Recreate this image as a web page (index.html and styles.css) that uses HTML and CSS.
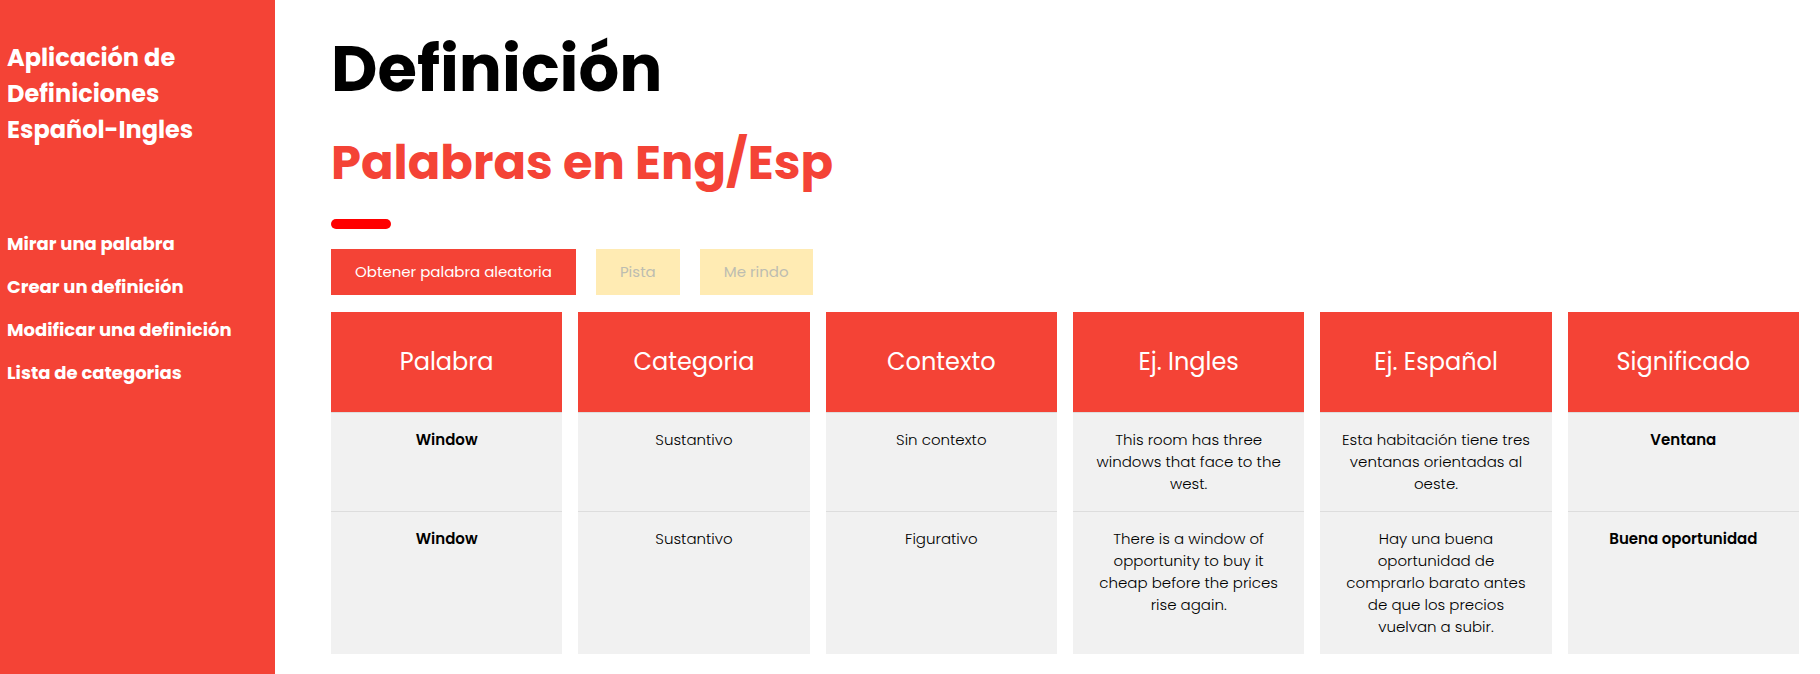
FILE: index.html
```html
<!DOCTYPE html>
<html lang="es">
<head>
<meta charset="utf-8">
<meta name="viewport" content="width=device-width, initial-scale=1">
<title>Definición</title>
<link rel="stylesheet" href="styles.css">
</head>
<body>
<div class="layout">
  <nav class="sidebar">
    <h3 class="brand">Aplicación de<br>Definiciones<br>Español-Ingles</h3>
    <div class="menu">
      <a href="#mirar">Mirar una palabra</a>
      <a href="#crear">Crear un definición</a>
      <a href="#modificar">Modificar una definición</a>
      <a href="#categorias">Lista de categorias</a>
    </div>
  </nav>
  <main class="main">
    <header class="intro">
      <h1 class="title">Definición</h1>
      <h2 class="subtitle">Palabras en Eng/Esp</h2>
      <hr class="rule">
      <div class="actions">
        <button class="btn btn-primary" type="button">Obtener palabra aleatoria</button>
        <button class="btn btn-muted" type="button" disabled>Pista</button>
        <button class="btn btn-muted" type="button" disabled>Me rindo</button>
      </div>
    </header>
    <table class="words">
      <thead>
        <tr>
          <th scope="col">Palabra</th>
          <th scope="col">Categoria</th>
          <th scope="col">Contexto</th>
          <th scope="col">Ej. Ingles</th>
          <th scope="col">Ej. Español</th>
          <th scope="col">Significado</th>
        </tr>
      </thead>
      <tbody>
        <tr>
          <td class="strong">Window</td>
          <td>Sustantivo</td>
          <td>Sin contexto</td>
          <td>This room has three windows that face to the west.</td>
          <td>Esta habitación tiene tres ventanas orientadas al oeste.</td>
          <td class="strong">Ventana</td>
        </tr>
        <tr>
          <td class="strong">Window</td>
          <td>Sustantivo</td>
          <td>Figurativo</td>
          <td>There is a window of opportunity to buy it cheap before the prices rise again.</td>
          <td>Hay una buena oportunidad de comprarlo barato antes de que los precios vuelvan a subir.</td>
          <td class="strong">Buena oportunidad</td>
        </tr>
      </tbody>
    </table>
  </main>
</div>
</body>
</html>
```

FILE: styles.css
```css
* {
  box-sizing: border-box;
}

body {
  margin: 0;
  font-family: Poppins, Inter, "Open Sans", sans-serif;
  font-size: 15px;
  line-height: 22px;
  color: #000;
  background: #fff;
}

.layout {
  display: flex;
  min-height: 100vh;
}

.sidebar {
  flex: 0 0 275px;
  padding: 40px 7px;
  color: #fff;
  background: #f44336;
}

.brand {
  margin: 0 0 82px;
  font-size: 24px;
  font-weight: 700;
  line-height: 36px;
}

.menu {
  display: flex;
  flex-direction: column;
  gap: 16px;
}

.menu a {
  color: inherit;
  font-size: 18px;
  font-weight: 700;
  line-height: 27px;
  text-decoration: none;
}

.main {
  flex: 1;
  min-width: 0;
  padding: 21px 5px 20px 40px;
}

.intro {
  padding: 0 16px;
}

.title {
  margin: 0;
  font-size: 64px;
  font-weight: 700;
  line-height: 96px;
}

.subtitle {
  margin: 10px 0 20px;
  color: #f44336;
  font-size: 48px;
  font-weight: 700;
  line-height: 72px;
}

.rule {
  width: 60px;
  height: 10px;
  margin: 0 0 20px;
  border: 0;
  border-radius: 5px;
  background: #f00;
}

.actions {
  display: flex;
  gap: 20px;
  margin-bottom: 17px;
}

.btn {
  padding: 12px 24px;
  border: 0;
  font-family: inherit;
  font-size: 15px;
  line-height: 22px;
}

.btn-primary {
  color: #fff;
  background: #f44336;
}

.btn-muted {
  color: #bdbdb1;
  background: #ffebb3;
}

.words {
  width: 100%;
  table-layout: fixed;
  border-spacing: 16px 0;
}

.words th {
  height: 100px;
  padding: 0;
  color: #fff;
  background: #f44336;
  font-size: 24px;
  font-weight: 400;
  line-height: 36px;
}

.words td {
  padding: 16px 18px;
  border-top: 1px solid #ddd;
  background: #f1f1f1;
  font-weight: 300;
  text-align: center;
  vertical-align: top;
}

.words .strong {
  font-weight: 600;
}
```
